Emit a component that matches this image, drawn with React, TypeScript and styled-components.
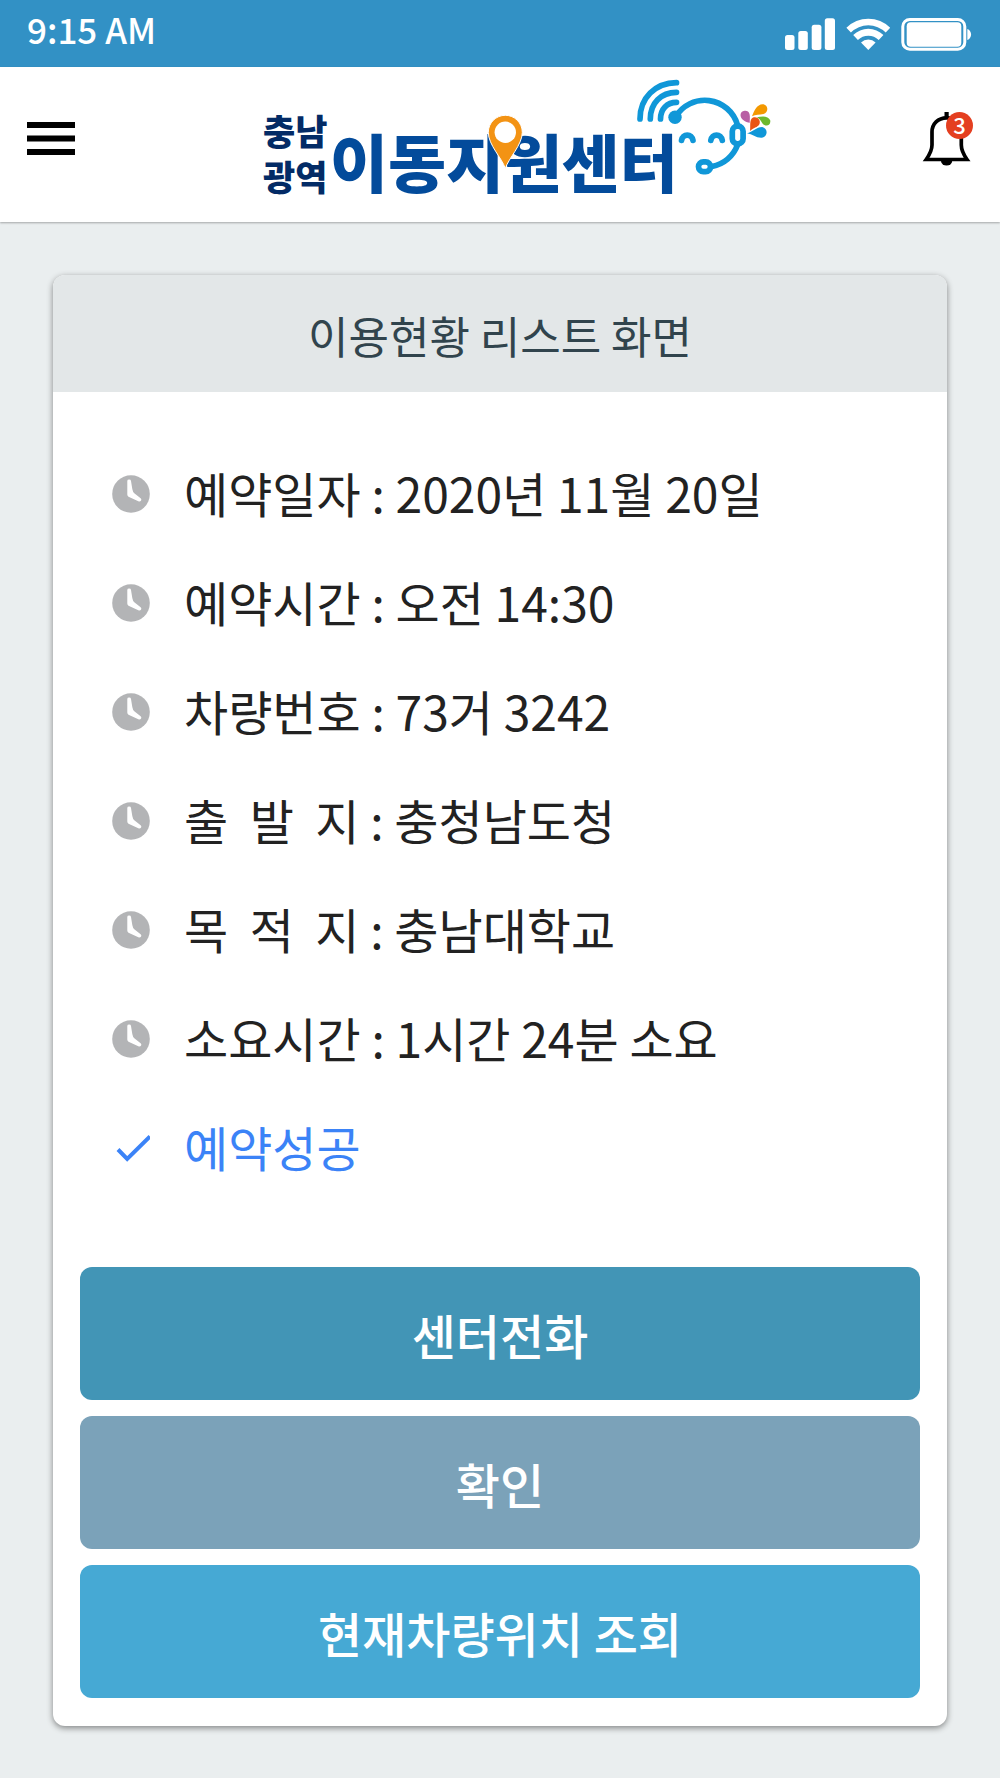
import React from "react";
import styled, { createGlobalStyle } from "styled-components";

const GlobalStyle = createGlobalStyle`
  *, *::before, *::after { box-sizing: border-box; }
  body {
    margin: 0;
    background: #eaeeef;
    color: #222222;
    font-family: "Noto Sans CJK KR", "Noto Sans", sans-serif;
  }
  button { font: inherit; border: 0; cursor: pointer; }
`;

const Screen = styled.div`
  display: flex;
  flex-direction: column;
  min-height: 100vh;
`;

const StatusBar = styled.div`
  display: flex;
  align-items: center;
  justify-content: space-between;
  height: 67px;
  padding: 0 28px 0 27px;
  background: #3291c5;
  color: #ffffff;
`;

const Clock = styled.time`
  font-size: 35px;
  font-weight: 500;
  line-height: 56px;
  padding-bottom: 10px;
`;

const AppHeader = styled.header`
  display: grid;
  grid-template-columns: 1fr auto 1fr;
  align-items: center;
  height: 155px;
  padding: 0 26px 12px;
  background: #ffffff;
  box-shadow: 0 1px 2px rgba(0, 0, 0, 0.3);
`;

const IconButton = styled.button<{ $end?: boolean }>`
  position: relative;
  display: flex;
  justify-self: ${(p) => (p.$end ? "end" : "start")};
  padding: 0;
  background: none;
  color: #000000;
`;

const Badge = styled.span`
  position: absolute;
  top: 0;
  right: 1px;
  width: 27px;
  height: 27px;
  border-radius: 50%;
  background: #e43f20;
  color: #ffffff;
  font-size: 22px;
  font-weight: 500;
  line-height: 25px;
  text-align: center;
`;

const LogoLink = styled.a`
  display: flex;
`;

const Main = styled.main`
  flex: 1;
  padding: 53px 53px 52px;
`;

const Card = styled.section`
  border-radius: 12px;
  overflow: hidden;
  background: #ffffff;
  box-shadow: 0 2px 6px rgba(0, 0, 0, 0.45);
`;

const CardTitle = styled.h1`
  margin: 0;
  padding: 28px 0 25px;
  background: #e3e7e8;
  color: #31444d;
  font-size: 44px;
  font-weight: 400;
  line-height: 64px;
  text-align: center;
`;

const DetailList = styled.ul`
  margin: 0;
  padding: 47px 27px 65px 59px;
  list-style: none;
`;

const DetailItem = styled.li<{ $accent?: boolean }>`
  display: flex;
  align-items: center;
  gap: 34px;
  height: 109px;
  color: ${(p) => (p.$accent ? "#3b83f7" : "#222222")};
  font-size: 48px;
  line-height: 72px;
  white-space: pre;
`;

const DetailText = styled.span`
  padding-bottom: 4px;
`;

const Actions = styled.div`
  display: flex;
  flex-direction: column;
  gap: 16px;
  padding: 0 27px 28px;
`;

const ActionButton = styled.button<{ $color: string }>`
  height: 133px;
  padding: 0;
  border-radius: 12px;
  background: ${(p) => p.$color};
  color: #ffffff;
  && {
    font-size: 48px;
    font-weight: 500;
    line-height: 72px;
  }
`;

const StatusIcons = () => (
  <svg width="188" height="34" viewBox="784 16 188 34" fill="#fff" role="img" aria-label="신호, 와이파이, 배터리">
    <rect x="785" y="34" width="9.5" height="15" rx="2.5" />
    <rect x="798.3" y="30" width="9.5" height="19" rx="2.5" />
    <rect x="811.7" y="23.7" width="9.7" height="25.3" rx="2.5" />
    <rect x="824.8" y="17.3" width="10.2" height="31.7" rx="2.5" />
    <path d="M846.4 26.7a31 31 0 0 1 43.8 0l-4.5 4.8a24.6 24.6 0 0 0-34.8 0Z" />
    <path d="M853.2 34.1a21.3 21.3 0 0 1 30.2 0l-4.7 4.9a14.8 14.8 0 0 0-20.8 0Z" />
    <path d="M861 41.6a10.3 10.3 0 0 1 14.6 0l-7.3 7.3Z" />
    <rect x="902.8" y="18.5" width="62" height="29.7" rx="7" fill="none" stroke="#fff" strokeWidth="3" />
    <rect x="906.7" y="21.2" width="54.6" height="24.6" rx="4" />
    <path d="M967.3 28c5 1.5 5 9.5 0 11Z" />
  </svg>
);

const MenuIcon = () => (
  <svg width="50" height="33" viewBox="0 0 50 33" fill="currentColor" aria-hidden="true">
    <rect x="1" y="0" width="48" height="6" />
    <rect x="1" y="13.5" width="48" height="6" />
    <rect x="1" y="27" width="48" height="6" />
  </svg>
);

const BellIcon = () => (
  <svg width="52" height="54" viewBox="0 0 52 54" aria-hidden="true">
    <rect x="22.5" width="4.2" height="6" />
    <path
      d="M24.6 5.8C16 5.8 10 12 10 20V33C10 38.5 8 42 4.2 47.5H45C41.2 42 39.3 38.5 39.3 33V20C39.3 12 33 5.8 24.6 5.8Z"
      fill="none"
      stroke="#000"
      strokeWidth="3.7"
    />
    <path d="M19 49h11.2a5.6 4.6 0 0 1-11.2 0Z" />
  </svg>
);

const ClockIcon = () => (
  <svg width="38" height="38" viewBox="0 0 38 38" aria-hidden="true">
    <circle cx="19" cy="19" r="18.8" fill="#b3b4b6" />
    <path
      d="M15.3 6q0-1.4 1.8-1.4T19 6L20.3 14q.5 3 2 4.200l6.300 5q1.200 1 .5 2.200t-2.200 1L16.500 21.700q-1.200-.7-1.200-2.200Z"
      fill="#fff"
    />
  </svg>
);

const CheckIcon = () => (
  <svg width="38" height="38" viewBox="0 0 38 38" aria-hidden="true">
    <path d="M6 20.500 15.200 30 38 7.500" fill="none" stroke="currentColor" strokeWidth="4" />
  </svg>
);

const Logo = () => (
  <svg width="544" height="130" viewBox="228 74 544 130" role="img" aria-label="충남광역 이동지원센터">
    <g fontFamily='"Noto Sans CJK KR", sans-serif' fontWeight="900">
      <text fill="#032b66" fontSize="35">
        <tspan x="263" y="145">충남</tspan>
        <tspan x="263" y="191">광역</tspan>
      </text>
      <text x="330" y="187" fontSize="63" fill="#034b9b">이동지원센터</text>
    </g>
    <path
      d="M505.3 168.500C502 158 488.300 145 488.300 132.300a17 17 0 0 1 34 0C522.300 145 508.600 158 505.300 168.500Z"
      fill="#f39314"
      stroke="#fff"
      strokeWidth="1"
    />
    <circle cx="505.3" cy="132.3" r="10.7" fill="#fff" />
    <g fill="none" stroke="#1097d8" strokeWidth="5.7" strokeLinecap="round">
      <path d="M640 119C640 98 655 83 676.5 82.7" />
      <path d="M650.3 119C650.3 103 661 92.3 676.5 92.3" />
      <path d="M660.5 119C660.5 109 667 102.3 676.5 102.3" />
      <path d="M675.5 117A34 34 0 0 1 737.5 125" />
      <path d="M737.5 145A34 34 0 0 1 712 166.5" />
      <rect x="732.3" y="126.2" width="10.8" height="17.6" rx="5" />
      <rect x="698.5" y="161.8" width="12" height="9.8" rx="4.8" />
      <path d="M681.5 140.5C682.5 133.2 692 133.2 693 140.5" />
      <path d="M710.8 140.5C711.8 133.2 721.3 133.2 722.3 140.5" />
    </g>
    <circle cx="675" cy="117.3" r="6.7" fill="#1097d8" />
    <path d="M749.8 122.8C745.5 122 740.5 119.5 740.5 115A4.6 4.6 0 0 1 749.5 114C750.3 117 749.6 120 749.8 122.8Z" fill="#b85fa4" />
    <path d="M752 116.3C754.5 110 757 104.5 762.5 104.2 768.5 104.3 769 112.5 763.5 114 759.5 115 755.5 114.5 752 116.3Z" fill="#f39800" />
    <path d="M757 117.3C762 116 768.5 115.5 770.3 120.5 770.8 126 765.5 127 762.5 123.5 760.8 121 759.5 118.5 757 117.3Z" fill="#6cb92d" />
    <path d="M750 131C750.8 126.5 749 119.5 753 117.5 757.5 116 761 120 759.5 124 758 127.5 753 127.8 750 131Z" fill="#ea5514" />
    <path d="M747 133.3C752.5 132 756.5 127 762 127 768.5 128 768 137.5 761.5 137.8 756 138 752.5 134 747 133.3Z" fill="#1097d8" />
  </svg>
);

const details = [
  "예약일자 : 2020년 11월 20일",
  "예약시간 : 오전 14:30",
  "차량번호 : 73거 3242",
  "출  발  지 : 충청남도청",
  "목  적  지 : 충남대학교",
  "소요시간 : 1시간 24분 소요",
];

const actions = [
  { label: "센터전화", color: "#4295b6" },
  { label: "확인", color: "#7ba2b9" },
  { label: "현재차량위치 조회", color: "#46a9d4" },
];

export default function App() {
  return (
    <>
      <GlobalStyle />
      <Screen>
        <StatusBar>
          <Clock dateTime="09:15">9:15 AM</Clock>
          <StatusIcons />
        </StatusBar>
        <AppHeader>
          <IconButton type="button" aria-label="메뉴">
            <MenuIcon />
          </IconButton>
          <LogoLink href="#" aria-label="충남광역 이동지원센터">
            <Logo />
          </LogoLink>
          <IconButton type="button" aria-label="알림" $end>
            <BellIcon />
            <Badge>3</Badge>
          </IconButton>
        </AppHeader>
        <Main>
          <Card>
            <CardTitle>이용현황 리스트 화면</CardTitle>
            <DetailList>
              {details.map((text) => (
                <DetailItem key={text}>
                  <ClockIcon />
                  <DetailText>{text}</DetailText>
                </DetailItem>
              ))}
              <DetailItem $accent>
                <CheckIcon />
                <DetailText>예약성공</DetailText>
              </DetailItem>
            </DetailList>
            <Actions>
              {actions.map(({ label, color }) => (
                <ActionButton key={label} type="button" $color={color}>
                  {label}
                </ActionButton>
              ))}
            </Actions>
          </Card>
        </Main>
      </Screen>
    </>
  );
}
